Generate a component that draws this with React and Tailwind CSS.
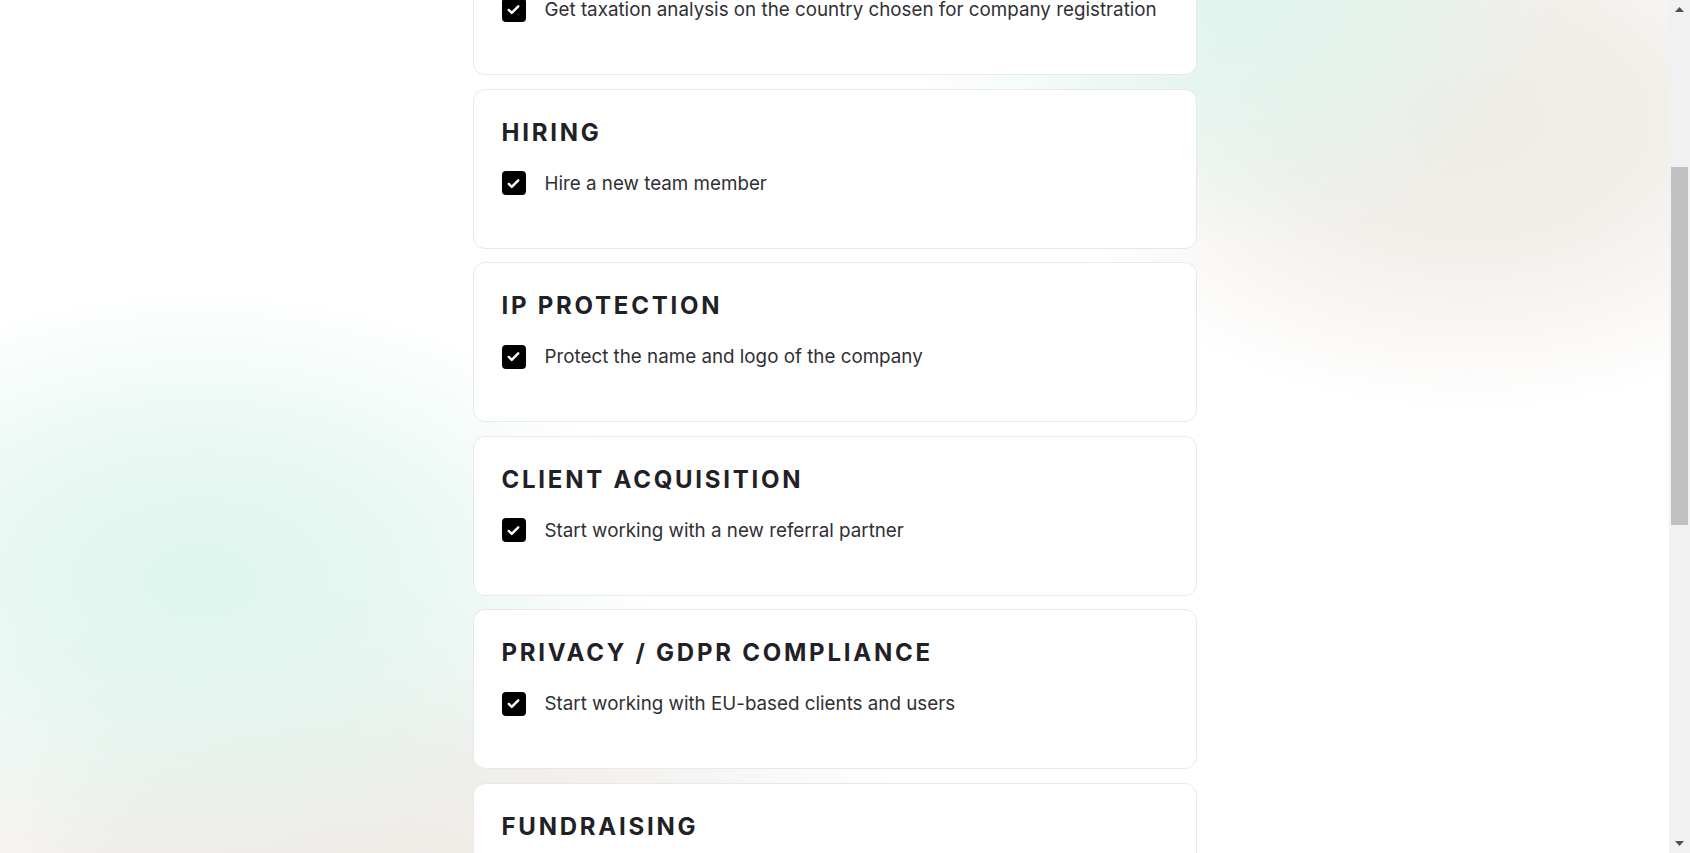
import React from 'react';

const SECTIONS = [
  { title: 'COMPANY FORMATION', item: 'Get taxation analysis on the country chosen for company registration' },
  { title: 'HIRING', item: 'Hire a new team member' },
  { title: 'IP PROTECTION', item: 'Protect the name and logo of the company' },
  { title: 'CLIENT ACQUISITION', item: 'Start working with a new referral partner' },
  { title: 'PRIVACY / GDPR COMPLIANCE', item: 'Start working with EU-based clients and users' },
  { title: 'FUNDRAISING', item: 'Raise a pre-seed round from angel investors' },
];

const CheckBox = () => (
  <span className="flex h-6 w-6 shrink-0 items-center justify-center rounded-[4px] bg-black">
    <svg className="h-[19px] w-[19px]" viewBox="0 0 24 24" fill="none" stroke="#fff" strokeWidth={3} strokeLinecap="round" strokeLinejoin="round">
      <path d="M6 12.5l3.8 3.8L18 8" />
    </svg>
  </span>
);

const SectionCard = ({ title, item }) => (
  <div className="h-[160px] shrink-0 rounded-xl border border-[#e7e7ef] bg-white px-7 pt-7">
    <h2 className="text-[24px] font-bold leading-[29px] tracking-[0.115em] text-[#1f2126]">{title}</h2>
    <div className="mt-[23px] flex items-center gap-[19px]">
      <CheckBox />
      <span className="text-[18.8px] leading-[27px] text-[#303034]">{item}</span>
    </div>
  </div>
);

const Arrow = ({ up }) => (
  <svg className="h-[5px] w-[9px]" viewBox="0 0 9 5">
    <path d={up ? 'M4.5 0L9 5H0z' : 'M0 0h9L4.5 5z'} fill="#505050" />
  </svg>
);

export default function App() {
  return (
    <div className="flex h-[853px] w-full overflow-hidden font-['Inter','Noto_Sans',sans-serif]">
      <main className="flex-1 overflow-hidden bg-white bg-[radial-gradient(ellipse_460px_290px_at_200px_580px,#ddf6ee_0%,rgba(224,245,238,0.75)_45%,rgba(255,255,255,0)_100%),radial-gradient(ellipse_580px_300px_at_360px_880px,#efebe7_0%,rgba(239,235,231,0.85)_45%,rgba(239,235,231,0)_100%),radial-gradient(ellipse_330px_250px_at_1230px_0px,#dff5ee_0%,rgba(223,245,238,0.6)_45%,rgba(223,245,238,0)_100%),radial-gradient(ellipse_430px_290px_at_1470px_120px,#efebe6_0%,rgba(239,235,230,0.8)_45%,rgba(239,235,230,0)_100%)]">
        <div className="mx-auto -mt-[85px] flex w-[724px] flex-col gap-[13.5px]">
          {SECTIONS.map((s) => (
            <SectionCard key={s.title} title={s.title} item={s.item} />
          ))}
        </div>
      </main>

      {/* scrollbar */}
      <div className="flex w-[21px] shrink-0 flex-col items-center bg-[#f1f1f1]">
        <div className="flex h-[17px] items-center justify-center pt-[2px]">
          <Arrow up />
        </div>
        <div className="mt-[150px] h-[358px] w-[17px] bg-[#c1c1c1]" />
        <div className="flex-1" />
        <div className="flex h-[17px] items-start justify-center pt-[5px]">
          <Arrow />
        </div>
      </div>
    </div>
  );
}
